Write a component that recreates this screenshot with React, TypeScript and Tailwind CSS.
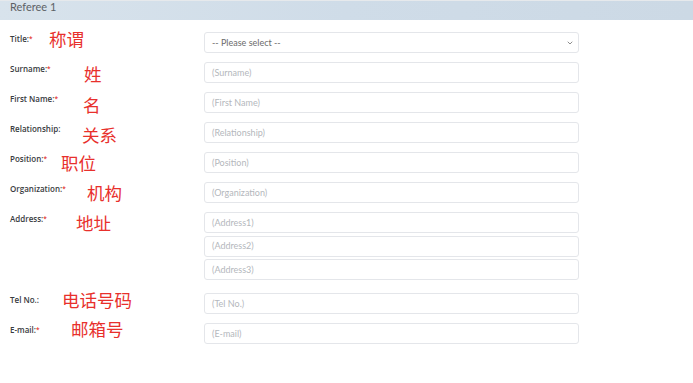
import { ChevronDown } from "lucide-react";

type Field = {
  label: string;
  required?: boolean;
  note: string;
  noteLeft: string;
  noteTop: string;
  placeholders: string[];
  select?: boolean;
  rowClass: string;
};

const fields: Field[] = [
  { label: "Title:", required: true, note: "称谓", noteLeft: "left-[39px]", noteTop: "top-[-3px]", placeholders: ["-- Please select --"], select: true, rowClass: "mt-[12px]" },
  { label: "Surname:", required: true, note: "姓", noteLeft: "left-[74px]", noteTop: "top-[2px]", placeholders: ["(Surname)"], rowClass: "mt-[9px]" },
  { label: "First Name:", required: true, note: "名", noteLeft: "left-[73px]", noteTop: "top-[3px]", placeholders: ["(First Name)"], rowClass: "mt-[9px]" },
  { label: "Relationship:", note: "关系", noteLeft: "left-[72px]", noteTop: "top-[3px]", placeholders: ["(Relationship)"], rowClass: "mt-[9px]" },
  { label: "Position:", required: true, note: "职位", noteLeft: "left-[51px]", noteTop: "top-[1px]", placeholders: ["(Position)"], rowClass: "mt-[9px]" },
  { label: "Organization:", required: true, note: "机构", noteLeft: "left-[77px]", noteTop: "top-[1px]", placeholders: ["(Organization)"], rowClass: "mt-[9px]" },
  { label: "Address:", required: true, note: "地址", noteLeft: "left-[66px]", noteTop: "top-[1px]", placeholders: ["(Address1)", "(Address2)", "(Address3)"], rowClass: "mt-[9px]" },
  { label: "Tel No.:", note: "电话号码", noteLeft: "left-[52px]", noteTop: "top-[-3px]", placeholders: ["(Tel No.)"], rowClass: "mt-[13px]" },
  { label: "E-mail:", required: true, note: "邮箱号", noteLeft: "left-[61px]", noteTop: "top-[-4px]", placeholders: ["(E-mail)"], rowClass: "mt-[9px]" },
];

const Box = ({ text, select }: { text: string; select?: boolean }) => (
  <div className="flex h-[21px] w-[375px] items-center justify-between rounded-[3px] border border-[#e4e6ea] bg-white pl-[7px] pr-[4px]">
    <span className={select ? "text-[9px] text-[#6b6b6b]" : "text-[9px] text-[#b4b7bc]"}>{text}</span>
    {select && <ChevronDown className="size-[8px] text-[#777]" strokeWidth={2.5} />}
  </div>
);

const App = () => {
  return (
    <div className="min-h-[383px] w-[693px] bg-white font-['Lato','Noto_Sans',sans-serif]">
      <div className="h-[20px] border-t border-[#e6e9ec] bg-linear-to-r from-[#d8e3ec] via-[#cfdce8] to-[#ccd9e5] pl-[10px]">
        <p className="text-[11px] leading-[12px] text-[#5d6166]">Referee 1</p>
      </div>
      <div className="pl-[10px]">
        {fields.map((f) => (
          <div key={f.label} className={`relative flex ${f.rowClass}`}>
            <p className="w-[194px] pt-[1px] font-['Open_Sans',sans-serif] text-[8px] font-semibold leading-[12px] text-[#383b40]">
              {f.label}
              {f.required && <span className="relative top-[-1px] text-[6.5px] text-[#e53935]">*</span>}
            </p>
            <span className={`absolute ${f.noteLeft} ${f.noteTop} font-['Noto_Sans_CJK_SC',sans-serif] text-[17.5px] leading-[20px] text-[#e8302c]`}>
              {f.note}
            </span>
            <div className="flex flex-col gap-[2.5px]">
              {f.placeholders.map((p) => (
                <Box key={p} text={p} select={f.select} />
              ))}
            </div>
          </div>
        ))}
      </div>
    </div>
  );
};

export default App;
